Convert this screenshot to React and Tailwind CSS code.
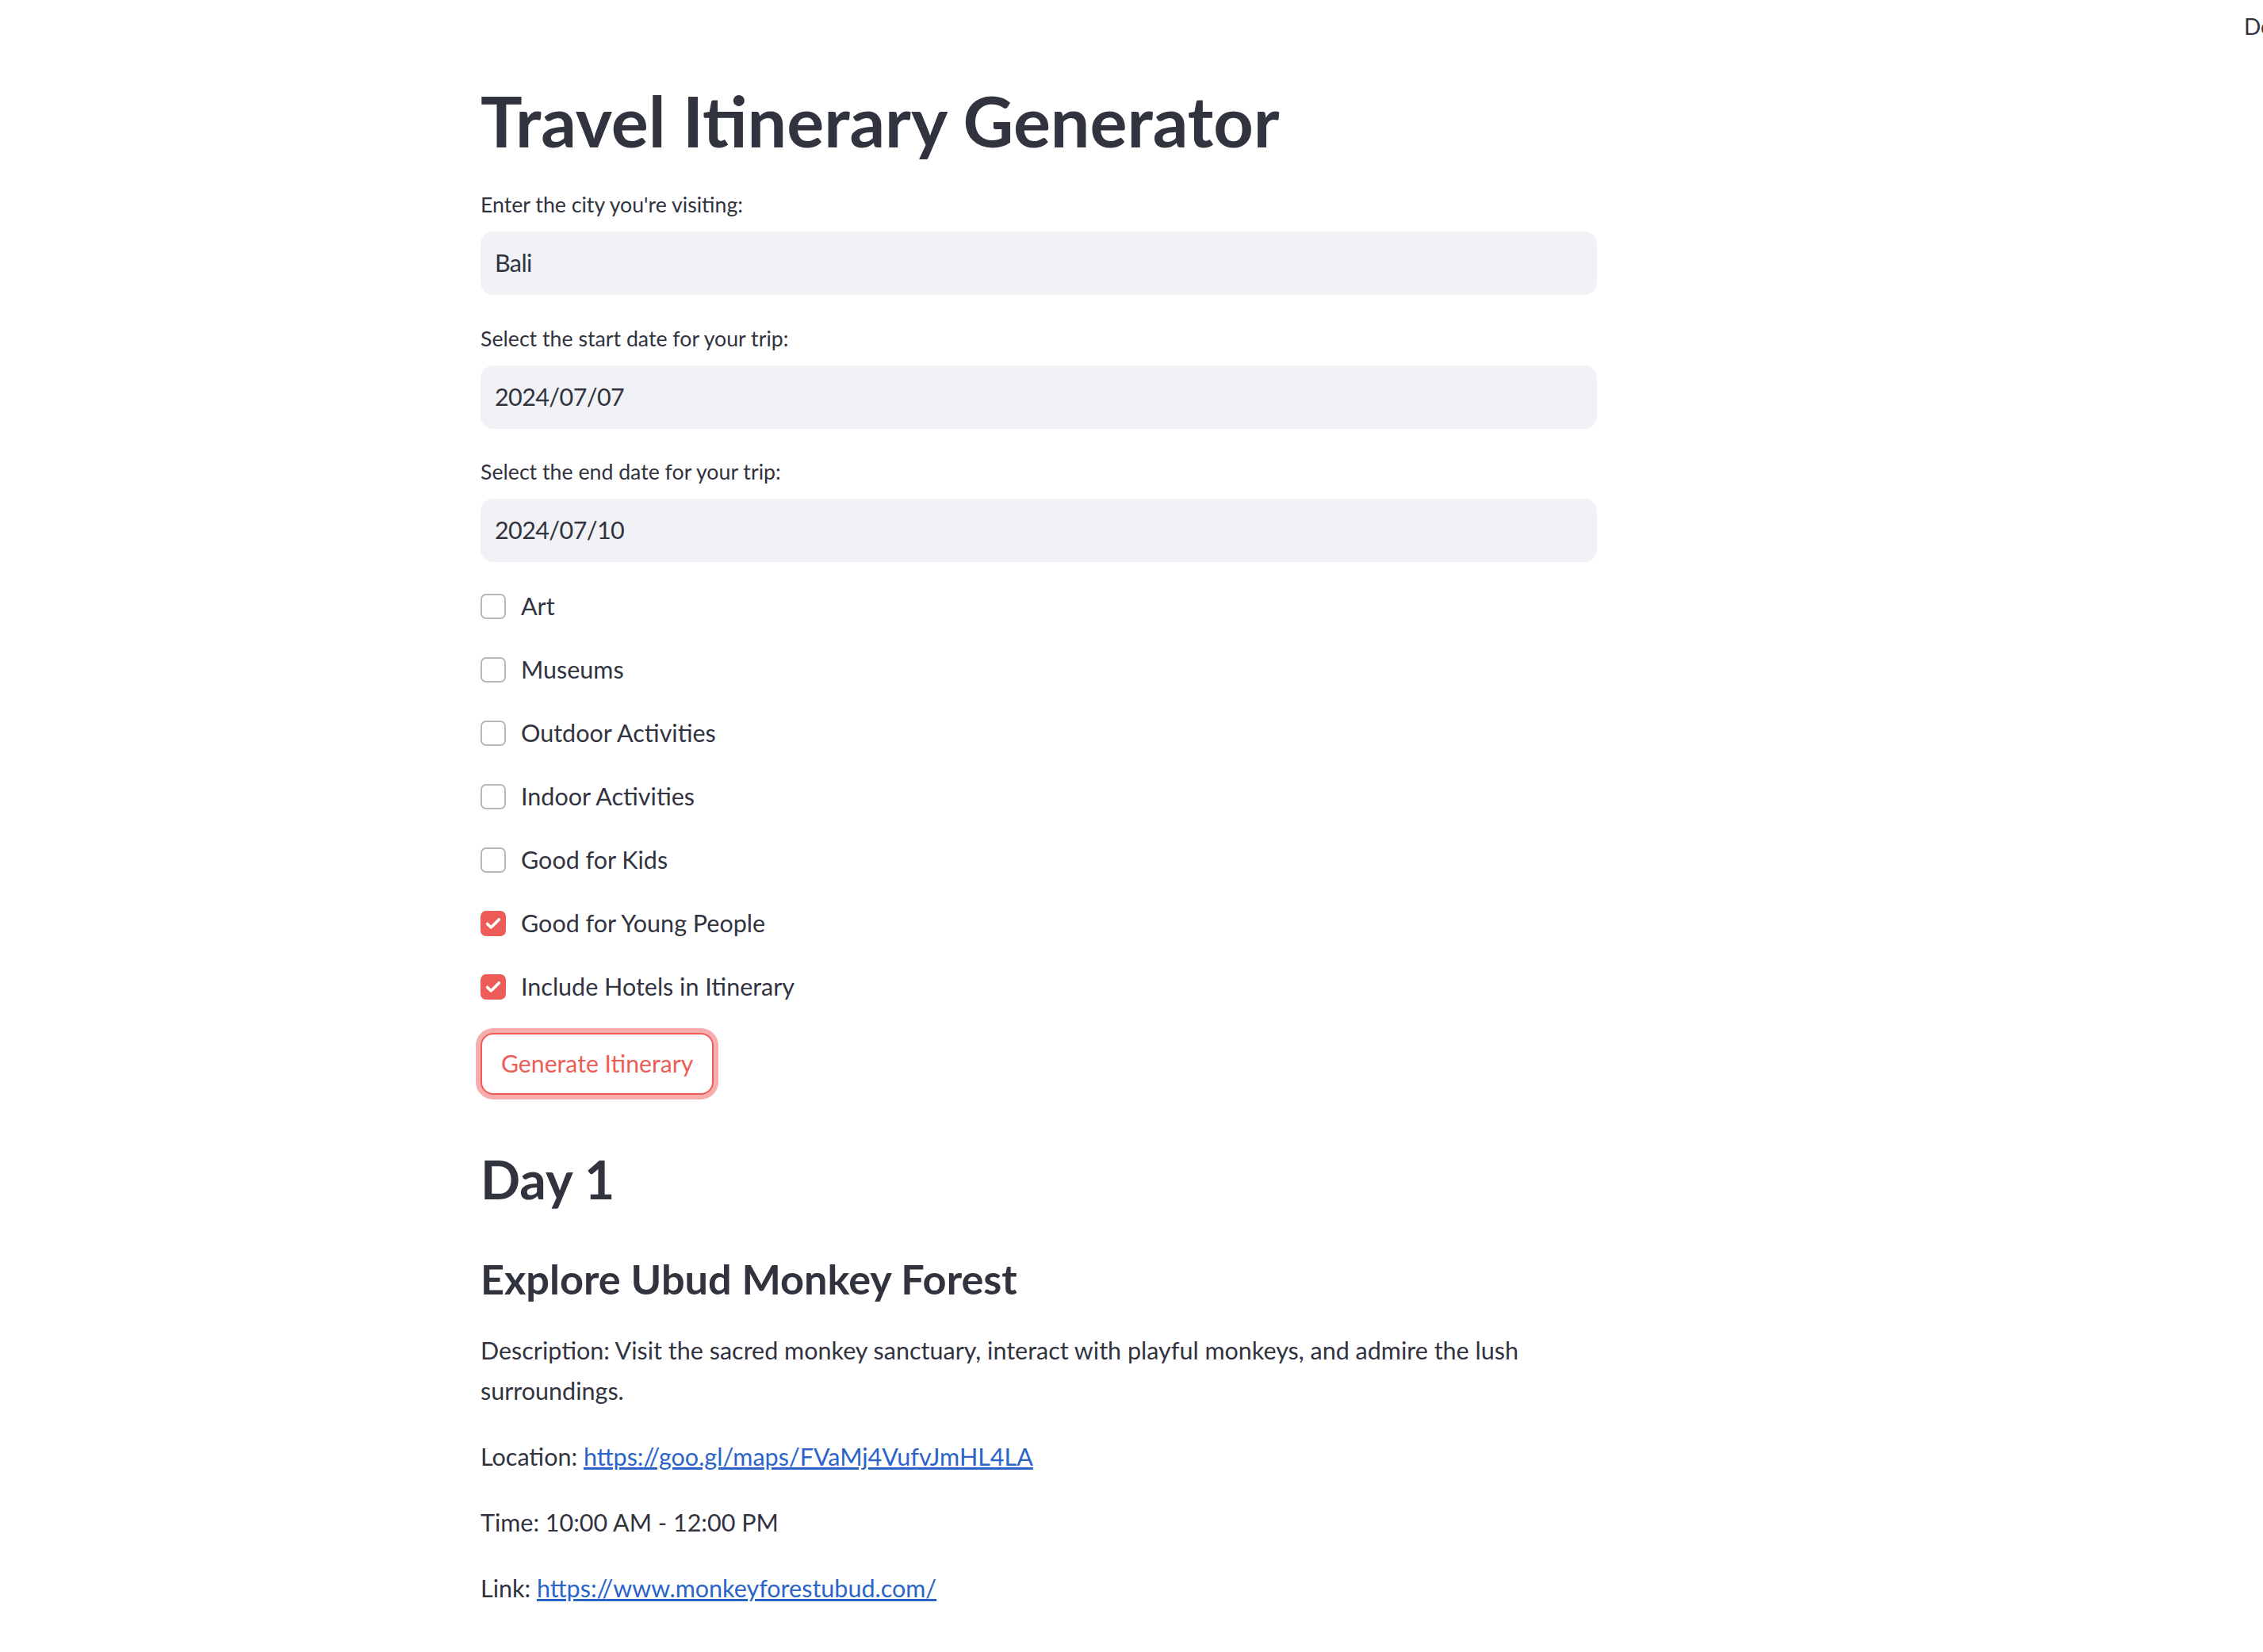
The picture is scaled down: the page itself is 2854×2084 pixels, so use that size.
import { useState } from 'react';

const FONT = { fontFamily: 'Lato, "Noto Sans", sans-serif' };

const interests = [
  { label: 'Art', checked: false },
  { label: 'Museums', checked: false },
  { label: 'Outdoor Activities', checked: false },
  { label: 'Indoor Activities', checked: false },
  { label: 'Good for Kids', checked: false },
  { label: 'Good for Young People', checked: true },
  { label: 'Include Hotels in Itinerary', checked: true },
];

function Field({ label, value, className }) {
  return (
    <div className={className}>
      <p className="text-[26.7px] leading-[44px]">{label}</p>
      <div className="mt-[12px] flex h-[80px] items-center rounded-[16px] bg-[#f0f2f6] pl-[18px] text-[30.5px] tracking-[-0.6px]">
        {value}
      </div>
    </div>
  );
}

function Checkbox({ label, checked }) {
  return (
    <label className="flex h-[48px] items-center gap-[19px]">
      {checked ? (
        <span className="flex h-[32px] w-[32px] items-center justify-center rounded-[7px] bg-[#ee5c58]">
          <svg width="22" height="22" viewBox="0 0 24 24" fill="none">
            <path d="M4 12.5l5 5L20 6.5" stroke="white" strokeWidth="4" strokeLinecap="round" strokeLinejoin="round" />
          </svg>
        </span>
      ) : (
        <span className="h-[32px] w-[32px] rounded-[7px] border-2 border-[#b7b8bd] bg-white" />
      )}
      <span className="text-[30.5px]">{label}</span>
    </label>
  );
}

export default function App() {
  const [items] = useState(interests);

  return (
    <div className="relative min-h-screen w-full overflow-hidden bg-white text-[#31333f]" style={FONT}>
      {/* header, runs off the right edge as in the app */}
      <div className="flex h-0 pl-[2830px]">
        <span className="whitespace-nowrap pt-[12px] text-[28px] leading-[42px]">Deploy</span>
      </div>

      <main className="ml-[606px] w-[1408px] pt-[99px]">
        <h1 className="text-[88px] font-bold leading-[106px]">Travel Itinerary Generator</h1>

        <Field className="mt-[31px]" label="Enter the city you're visiting:" value="Bali" />
        <Field className="mt-[33px]" label="Select the start date for your trip:" value="2024/07/07" />
        <Field className="mt-[32px]" label="Select the end date for your trip:" value="2024/07/10" />

        <div className="mt-[32px] flex flex-col gap-[32px]">
          {items.map((it) => (
            <Checkbox key={it.label} label={it.label} checked={it.checked} />
          ))}
        </div>

        <button className="mt-[34px] h-[78px] rounded-[16px] border-2 border-[#ee5c58] bg-white px-[24px] text-[30.2px] text-[#ee5c58] shadow-[0_0_0_6px_#f6adab]">
          Generate Itinerary
        </button>

        <h2 className="mt-[64px] text-[66px] font-bold leading-[86px]">Day 1</h2>
        <h3 className="mt-[48px] text-[52.3px] font-bold leading-[67px]">Explore Ubud Monkey Forest</h3>

        <div className="mt-[32px] text-[30.5px] leading-[51px]">
          <p className="mb-[32px]">
            Description: Visit the sacred monkey sanctuary, interact with playful monkeys, and admire the lush surroundings.
          </p>
          <p className="mb-[32px]">
            Location:{' '}
            <a href="#" className="text-[#2a64c8] underline">
              https://goo.gl/maps/FVaMj4VufvJmHL4LA
            </a>
          </p>
          <p className="mb-[32px]">Time: 10:00 AM - 12:00 PM</p>
          <p className="mb-[32px]">
            Link:{' '}
            <a href="#" className="text-[#2a64c8] underline">
              https://www.monkeyforestubud.com/
            </a>
          </p>
        </div>
      </main>
    </div>
  );
}
